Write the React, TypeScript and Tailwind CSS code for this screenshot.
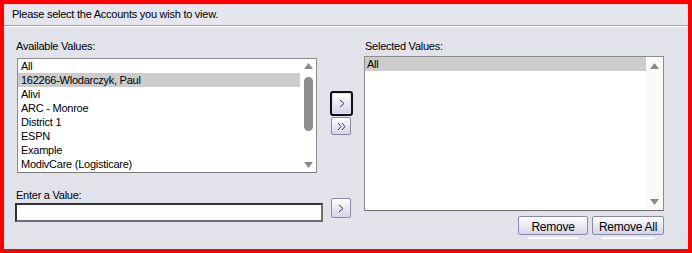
import React from "react";

const font = { fontFamily: '"Liberation Sans", Arial, sans-serif' };

function Up() {
  return (
    <svg width="9" height="6" viewBox="0 0 9 6">
      <polygon points="4.5,0 9,6 0,6" fill="#8a8a8a" />
    </svg>
  );
}
function Down() {
  return (
    <svg width="9" height="6" viewBox="0 0 9 6">
      <polygon points="0,0 9,0 4.5,6" fill="#8a8a8a" />
    </svg>
  );
}

function Arrow({ double }: { double?: boolean }) {
  return double ? (
    <svg width="9" height="9" viewBox="0 0 9 9">
      <polyline points="1,1 4,4.5 1,8" fill="none" stroke="#333366" strokeWidth="1" />
      <polyline points="5,1 8,4.5 5,8" fill="none" stroke="#333366" strokeWidth="1" />
    </svg>
  ) : (
    <svg width="6" height="9" viewBox="0 0 6 9">
      <polyline points="1,1 5,4.5 1,8" fill="none" stroke="#333366" strokeWidth="1" />
    </svg>
  );
}

const items = [
  "All",
  "162266-Wlodarczyk, Paul",
  "Alivi",
  "ARC - Monroe",
  "District 1",
  "ESPN",
  "Example",
  "ModivCare (Logisticare)",
];

export default function App() {
  return (
    <div
      className="w-[692px] h-[253px] border-4 border-[#ff0000] bg-[#e2e2eb] flex flex-col text-[11px] text-black tracking-[-0.25px]"
      style={font}
    >
      <div className="h-[22px] shrink-0 bg-[#e6e6ee] border-b border-[#a0a0ae] flex items-center pl-[8px]">
        Please select the Accounts you wish to view.
      </div>
      <div className="h-px bg-white shrink-0" />
      <div className="flex flex-1">
        {/* left column */}
        <div className="flex flex-col pl-[11px] w-[320px]">
          <div className="mt-[12px] h-[14px] leading-[14px] pl-[1px]">Available Values:</div>
          <div className="mt-[5px] ml-[2px] w-[300px] h-[115px] bg-white border border-[#8c8c8c] border-b-[#7a7a7a] flex">
            <div className="flex-1 flex flex-col">
              {items.map((it, i) => (
                <div
                  key={it}
                  className={
                    "h-[14px] leading-[14px] pl-[3px] " + (i === 1 ? "bg-[#cccccc]" : "")
                  }
                >
                  {it}
                </div>
              ))}
            </div>
            <div className="w-[16px] flex flex-col items-center pt-[4px] pb-[4px]">
              <Up />
              <div className="w-[9px] h-[54px] rounded-full bg-[#8e8e8e] mt-[8px]" />
              <div className="flex-1" />
              <Down />
            </div>
          </div>
          <div className="mt-[15px] h-[14px] leading-[14px] pl-[1px]">Enter a Value:</div>
          <div className="mt-[1px] flex items-center">
            <div className="w-[308px] h-[19px] bg-white border-2 border-[#333333] border-r-[#707070] border-b-[#707070]" />
          </div>
        </div>
        {/* middle buttons */}
        <div className="w-[38px] flex flex-col pl-[6px]">
          <div className="mt-[64px] w-[23px] h-[25px] border-2 border-[#111] rounded-[3px] flex items-center justify-center">
            <div className="w-[17px] h-[19px] flex items-center justify-center bg-gradient-to-b from-white to-[#d4d4e6]">
              <Arrow />
            </div>
          </div>
          <div className="mt-[1px] ml-[1px] w-[20px] h-[18px] border border-[#8a8aa8] rounded-[2px] flex items-center justify-center bg-gradient-to-b from-white to-[#d4d4e6]">
            <Arrow double />
          </div>
          <div className="mt-[63px] ml-[1px] w-[20px] h-[20px] border border-[#8a8aa8] rounded-[2px] flex items-center justify-center bg-gradient-to-b from-white to-[#d4d4e6]">
            <Arrow />
          </div>
        </div>
        {/* right column */}
        <div className="flex flex-col ml-[2px]">
          <div className="mt-[12px] h-[14px] leading-[14px] pl-[1px]">Selected Values:</div>
          <div className="mt-[3px] w-[300px] h-[155px] bg-white border border-[#8c8c8c] border-b-[#707070] flex">
            <div className="flex-1 flex flex-col">
              <div className="h-[14px] leading-[14px] pl-[2px] bg-[#cccccc]">All</div>
            </div>
            <div className="w-[17px] flex flex-col items-center justify-between pt-[6px] pb-[5px] bg-[#fafafa]">
              <Up />
              <Down />
            </div>
          </div>
          <div className="mt-[5px] flex justify-end gap-[4px] pr-0">
            <div className="flex flex-col items-center">
              <div className="w-[70px] h-[19px] border border-[#8a8aa8] rounded-[2px] bg-gradient-to-b from-white to-[#d4d4e6] flex items-center justify-center text-[12px] pt-[2px]">
                Remove
              </div>
              <div className="w-[50px] h-[2px] bg-white mt-[2px]" />
            </div>
            <div className="flex flex-col items-center">
              <div className="w-[72px] h-[19px] border border-[#8a8aa8] rounded-[2px] bg-gradient-to-b from-white to-[#d4d4e6] flex items-center justify-center text-[12px] pt-[2px]">
                Remove All
              </div>
              <div className="w-[52px] h-[2px] bg-white mt-[2px]" />
            </div>
          </div>
        </div>
      </div>
    </div>
  );
}
